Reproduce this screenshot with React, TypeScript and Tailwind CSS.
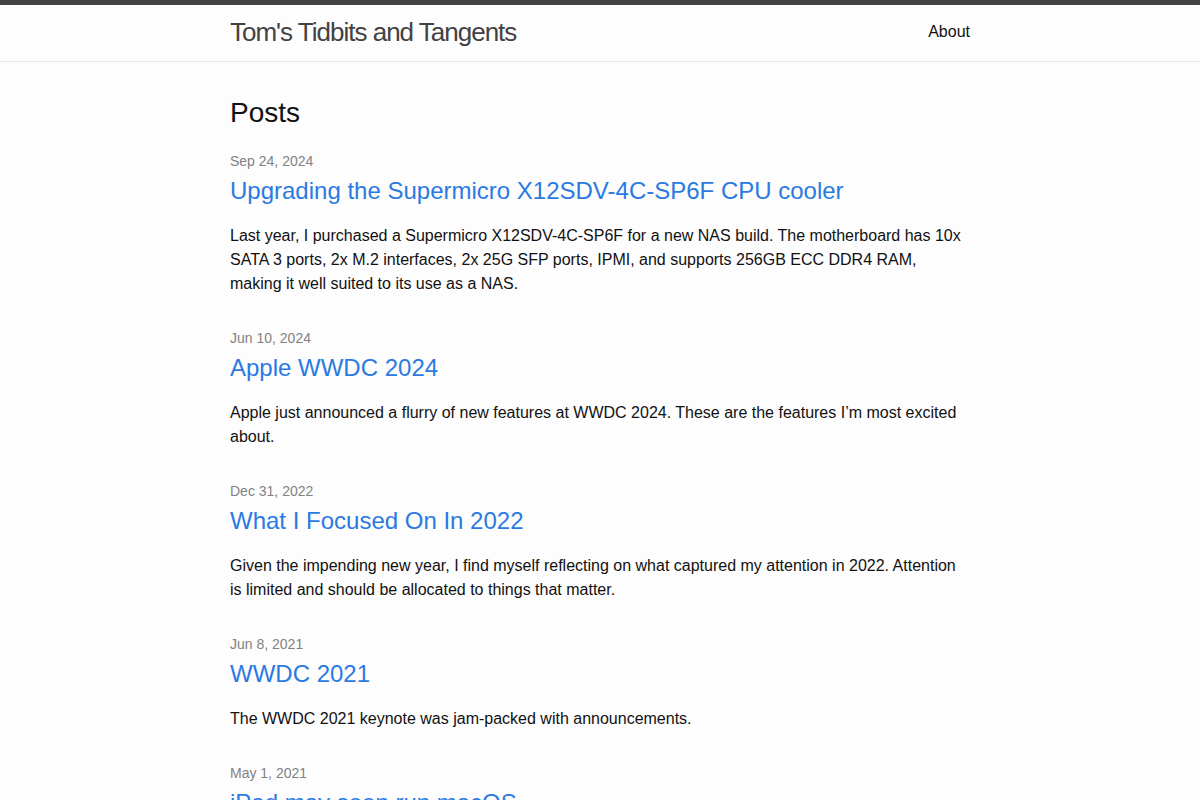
import React from 'react';

const posts = [
  {
    date: 'Sep 24, 2024',
    title: 'Upgrading the Supermicro X12SDV-4C-SP6F CPU cooler',
    excerpt:
      'Last year, I purchased a Supermicro X12SDV-4C-SP6F for a new NAS build. The motherboard has 10x SATA 3 ports, 2x M.2 interfaces, 2x 25G SFP ports, IPMI, and supports 256GB ECC DDR4 RAM, making it well suited to its use as a NAS.',
  },
  {
    date: 'Jun 10, 2024',
    title: 'Apple WWDC 2024',
    excerpt:
      'Apple just announced a flurry of new features at WWDC 2024. These are the features I\u2019m most excited about.',
  },
  {
    date: 'Dec 31, 2022',
    title: 'What I Focused On In 2022',
    excerpt:
      'Given the impending new year, I find myself reflecting on what captured my attention in 2022. Attention is limited and should be allocated to things that matter.',
  },
  {
    date: 'Jun 8, 2021',
    title: 'WWDC 2021',
    excerpt: 'The WWDC 2021 keynote was jam-packed with announcements.',
  },
  {
    date: 'May 1, 2021',
    title: 'iPad may soon run macOS',
    excerpt:
      'The new iPad Pro ships with the same M1 chip found in the latest Macs, which raises an interesting question about where the iPad goes next.',
  },
];

const App = () => {
  return (
    <div className="min-h-screen bg-[#fdfdfd] text-[#111] font-['Liberation_Sans',Helvetica,Arial,sans-serif] text-base leading-normal">
      <header className="border-t-[5px] border-t-[#424242] border-b border-b-[#e8e8e8]">
        <div className="max-w-[800px] mx-auto px-[30px] min-h-[56px] flex justify-between">
          <a className="text-[26px] leading-[54px] tracking-[-1px] text-[#424242] font-light">
            Tom's Tidbits and Tangents
          </a>
          <nav className="leading-[54px]">
            <a className="text-[#111]">About</a>
          </nav>
        </div>
      </header>

      <main className="py-[30px]">
        <div className="max-w-[800px] mx-auto px-[30px]">
          <h2 className="text-[28px] leading-[42px] mb-[15px]">Posts</h2>
          <ul>
            {posts.map((post) => (
              <li key={post.title} className="mb-[30px]">
                <span className="text-sm text-[#828282]">{post.date}</span>
                <h3 className="text-2xl leading-9 mb-[15px]">
                  <a className="text-[#2a7ae2]">{post.title}</a>
                </h3>
                <p>{post.excerpt}</p>
              </li>
            ))}
          </ul>
        </div>
      </main>
    </div>
  );
};

export default App;
